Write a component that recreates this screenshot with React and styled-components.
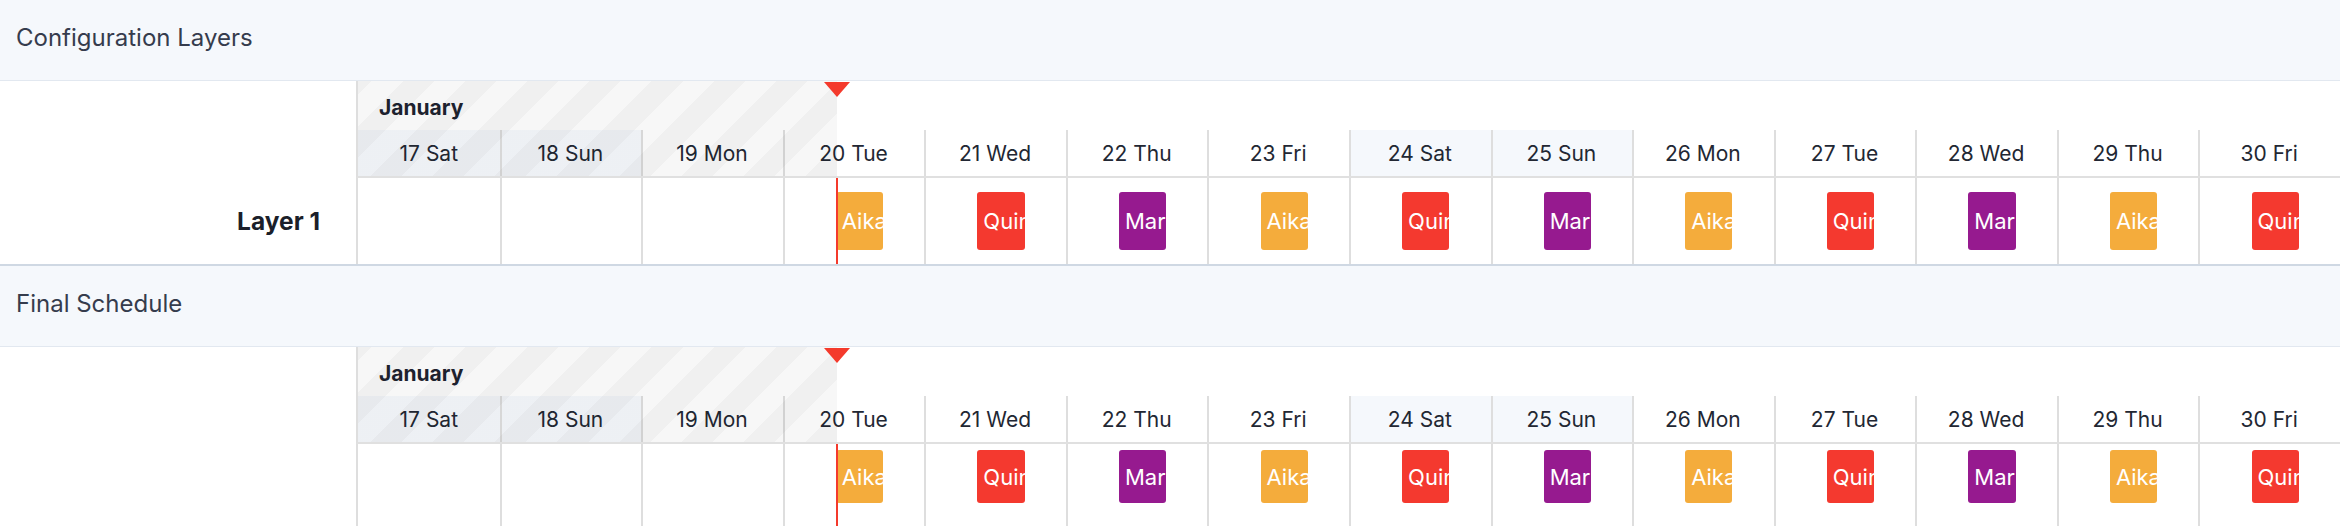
import React from 'react';
import styled, { createGlobalStyle, css } from 'styled-components';

const GlobalStyle = createGlobalStyle`
  html, body {
    margin: 0;
    padding: 0;
    background: #fff;
    overflow: hidden;
  }
  body {
    font-family: Inter, 'Noto Sans', sans-serif;
    color: #1f2430;
  }
`;

const DAYS = [
  [17, 'Sat'], [18, 'Sun'], [19, 'Mon'], [20, 'Tue'], [21, 'Wed'], [22, 'Thu'], [23, 'Fri'],
  [24, 'Sat'], [25, 'Sun'], [26, 'Mon'], [27, 'Tue'], [28, 'Wed'], [29, 'Thu'], [30, 'Fri'],
];

const PEOPLE = [
  { name: 'Aika', color: '#f4ac3c' },
  { name: 'Quin', color: '#f4392f' },
  { name: 'Mar', color: '#961a8f' },
];

// rotation starts on the 20th, shifts run 9:00 - 17:00
const FIRST_SHIFT_DAY = 3;
const SHIFT_START = 9 / 24;
const SHIFT_LENGTH = 8 / 24;
const NOW = (3 + 9.25 / 24) / DAYS.length;

const Section = styled.section`
  border-bottom: 2px solid #cfd8e3;
`;

const SectionTitle = styled.h2`
  margin: 0;
  height: 81px;
  box-sizing: border-box;
  display: flex;
  align-items: center;
  padding: 0 16px 6px;
  background: #f5f8fc;
  border-bottom: 1px solid #e2e8f0;
  font-size: 24px;
  font-weight: 400;
  color: #353c4d;
`;

const Board = styled.div`
  display: grid;
  grid-template-columns: 356px 1fr;
`;

const Corner = styled.div``;

const LaneLabel = styled.div`
  display: flex;
  align-items: center;
  justify-content: flex-end;
  padding-right: 36px;
  font-size: 24.5px;
  font-weight: 700;
  color: #1b1f2a;
`;

const TimeHeader = styled.div`
  position: relative;
  border-left: 2px solid #dedede;
  border-bottom: 2px solid #e0e0e0;
`;

const MonthRow = styled.div`
  height: 49px;
  box-sizing: border-box;
  display: flex;
  align-items: center;
  padding: 4px 0 0 21px;
  font-size: 21px;
  font-weight: 700;
  color: #1e2330;
`;

const DayRow = styled.div`
  display: grid;
  grid-template-columns: repeat(${DAYS.length}, 1fr);
  height: 46px;
`;

const DayCell = styled.div`
  display: flex;
  align-items: center;
  justify-content: center;
  font-size: 21px;
  color: #222733;
  background: ${({ $weekend }) => ($weekend ? '#f5f8fc' : 'transparent')};

  & + & {
    box-shadow: inset 2px 0 0 #dedede;
  }
`;

const PastShade = styled.div`
  position: absolute;
  top: 0;
  left: 0;
  bottom: 0;
  width: ${({ $at }) => $at * 100}%;
  background: repeating-linear-gradient(
    -45deg,
    rgba(0, 0, 0, 0.06) 0 22px,
    rgba(0, 0, 0, 0.03) 22px 44px
  );
  pointer-events: none;
`;

const NowFlag = styled.div`
  position: absolute;
  top: 1px;
  left: calc(${({ $at }) => $at * 100}% - 13px);
  width: 0;
  height: 0;
  border-left: 13px solid transparent;
  border-right: 13px solid transparent;
  border-top: 15px solid #f43a2c;
`;

const Lane = styled.div`
  position: relative;
  display: grid;
  grid-template-columns: repeat(${DAYS.length}, 1fr);
  height: ${({ $compact }) => ($compact ? '96px' : '86px')};
  border-left: 2px solid #dedede;
`;

const LaneCell = styled.div`
  position: relative;

  & + & {
    box-shadow: inset 2px 0 0 #dedede;
  }
`;

const Shift = styled.div`
  position: absolute;
  left: ${SHIFT_START * 100}%;
  width: ${SHIFT_LENGTH * 100}%;
  top: 14px;
  height: 58px;
  box-sizing: border-box;
  display: flex;
  align-items: center;
  padding: 0 6px;
  overflow: hidden;
  white-space: nowrap;
  border-radius: 3px;
  background: ${({ $color }) => $color};
  color: #fff;
  font-size: 22px;
  font-weight: 400;

  ${({ $compact }) =>
    $compact &&
    css`
      top: 6px;
      height: 53px;
    `};
`;

const NowLine = styled.div`
  position: absolute;
  top: 0;
  bottom: 0;
  left: calc(${({ $at }) => $at * 100}% - 1px);
  width: 2px;
  background: #f43a2c;
  z-index: 1;
`;

const Timeline = ({ label, compact }) => (
  <Board>
    <Corner />
    <TimeHeader>
      <PastShade $at={NOW} />
      <MonthRow>January</MonthRow>
      <DayRow>
        {DAYS.map(([date, day]) => (
          <DayCell key={date} $weekend={day === 'Sat' || day === 'Sun'}>
            {date} {day}
          </DayCell>
        ))}
      </DayRow>
      <NowFlag $at={NOW} />
    </TimeHeader>
    <LaneLabel>{label}</LaneLabel>
    <Lane $compact={compact}>
      {DAYS.map(([date], i) => {
        const person = i >= FIRST_SHIFT_DAY ? PEOPLE[(i - FIRST_SHIFT_DAY) % PEOPLE.length] : null;
        return (
          <LaneCell key={date}>
            {person && (
              <Shift $color={person.color} $compact={compact}>
                {person.name}
              </Shift>
            )}
          </LaneCell>
        );
      })}
      <NowLine $at={NOW} />
    </Lane>
  </Board>
);

const App = () => (
  <>
    <GlobalStyle />
    <Section>
      <SectionTitle>Configuration Layers</SectionTitle>
      <Timeline label="Layer 1" />
    </Section>
    <Section>
      <SectionTitle>Final Schedule</SectionTitle>
      <Timeline compact />
    </Section>
  </>
);

export default App;
